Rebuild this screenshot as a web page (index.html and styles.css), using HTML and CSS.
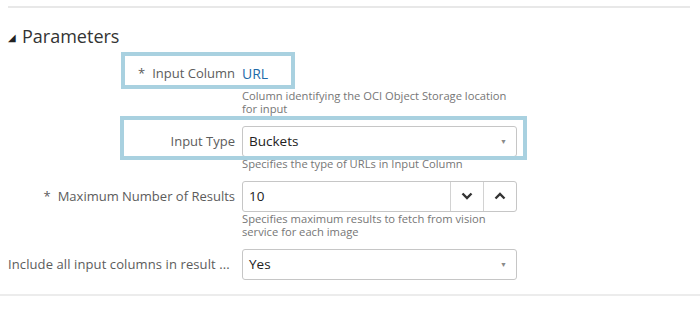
FILE: index.html
```html
<!DOCTYPE html>
<html>
<head>
<meta charset="utf-8">
<link rel="stylesheet" href="styles.css">
</head>
<body>
<div class="page">
  <div class="top-rule"></div>
  <h2 class="heading"><span class="tri">&#9698;</span>Parameters</h2>
  <div class="form">
    <div class="row">
      <div class="label"><span class="req">*</span>Input Column</div>
      <div class="field"><span class="link">URL</span></div>
      <div class="help">Column identifying the OCI Object Storage location for input</div>
    </div>
    <div class="row">
      <div class="label">Input Type</div>
      <div class="field"><div class="box select"><span>Buckets</span><span class="caret">&#9660;</span></div></div>
      <div class="help">Specifies the type of URLs in Input Column</div>
    </div>
    <div class="row">
      <div class="label"><span class="req">*</span>Maximum Number of Results</div>
      <div class="field">
        <div class="box number">
          <span class="num-val">10</span>
          <span class="spin"><svg width="12" height="10" viewBox="0 0 12 10"><path d="M1.5 2.5 L6 7 L10.5 2.5" fill="none" stroke="#333" stroke-width="2.4"/></svg></span>
          <span class="spin"><svg width="12" height="10" viewBox="0 0 12 10"><path d="M1.5 7.5 L6 3 L10.5 7.5" fill="none" stroke="#333" stroke-width="2.4"/></svg></span>
        </div>
      </div>
      <div class="help">Specifies maximum results to fetch from vision service for each image</div>
    </div>
    <div class="row">
      <div class="label label-long">Include all input columns in result ...</div>
      <div class="field"><div class="box select"><span>Yes</span><span class="caret">&#9660;</span></div></div>
    </div>
    <div class="hl hl-one"></div>
    <div class="hl hl-two"></div>
  </div>
  <div class="bottom-rule"></div>
</div>
</body>
</html>
```
FILE: styles.css
```css
html, body { margin: 0; padding: 0; background: #fff; }
body { font-family: "Open Sans", "Noto Sans", sans-serif; color: #333; }
.page { width: 700px; height: 330px; padding-top: 6px; box-sizing: border-box; }
.top-rule { height: 2px; background: #e8e8e8; margin: 0 10px 0 8px; }
.heading {
  margin: 16px 0 0 8px;
  font-size: 18px;
  font-weight: 400;
  line-height: 24px;
  color: #333;
  display: flex;
  align-items: center;
}
.tri { font-size: 10px; margin-right: 6px; color: #222; position: relative; top: 1px; }
.form { position: relative; margin-top: 9px; margin-left: 8px; display: flex; flex-direction: column; gap: 10px; }
.row { display: grid; grid-template-columns: 227px 275px; column-gap: 7px; }
.label {
  grid-column: 1; grid-row: 1;
  text-align: right;
  font-size: 13px;
  color: #5c5c5c;
  line-height: 32px;
  height: 32px;
  white-space: nowrap;
}
.label-long { text-align: left; letter-spacing: 0.1px; }
.req { margin-right: 7px; }
.field { grid-column: 2; grid-row: 1; height: 32px; display: flex; align-items: center; }
.link { color: #1d6aa8; font-size: 14px; }
.help {
  grid-column: 2; grid-row: 2;
  font-size: 11.2px;
  line-height: 13px;
  color: #767676;
  padding-right: 4px;
}
.box {
  box-sizing: border-box;
  width: 275px; height: 31px;
  border: 1px solid #c6c6c6;
  border-radius: 3px;
  display: flex; align-items: center;
  font-size: 13.5px;
  color: #222;
}
.select { padding: 0 9px 0 6px; justify-content: space-between; }
.caret { font-size: 7px; color: #8a8a8a; }
.number { padding-left: 6px; }
.num-val { flex: 1; }
.spin {
  width: 32px; height: 29px;
  border-left: 1px solid #d2d2d2;
  display: flex; align-items: center; justify-content: center;
}
.hl { position: absolute; border: 4px solid #a9d1e0; box-sizing: border-box; pointer-events: none; }
.hl-one { left: 113px; top: -5px; width: 174px; height: 37px; }
.hl-two { left: 112px; top: 59px; width: 407px; height: 44px; }
.bottom-rule { height: 2px; background: #ececec; margin-top: 14px; }
```
